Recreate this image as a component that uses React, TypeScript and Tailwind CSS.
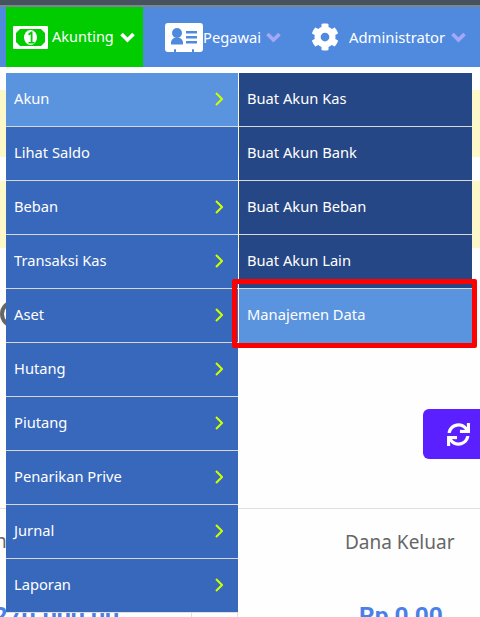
import { FaCog, FaSync } from "react-icons/fa"

const mainMenu = [
  { label: "Akun", arrow: true, active: true },
  { label: "Lihat Saldo", arrow: false },
  { label: "Beban", arrow: true },
  { label: "Transaksi Kas", arrow: true },
  { label: "Aset", arrow: true },
  { label: "Hutang", arrow: true },
  { label: "Piutang", arrow: true },
  { label: "Penarikan Prive", arrow: true },
  { label: "Jurnal", arrow: true },
  { label: "Laporan", arrow: true },
]

const subMenu = ["Buat Akun Kas", "Buat Akun Bank", "Buat Akun Beban", "Buat Akun Lain", "Manajemen Data"]

function MoneyIcon() {
  return (
    <svg viewBox="0 0 35 23" className="h-[23px] w-[35px]">
      <rect width="35" height="23" rx="1" fill="#fff" />
      <path d="M7 3h21l4 4v9l-4 4H7l-4-4V7z" fill="#00cc00" />
      <ellipse cx="17.500" cy="11.500" rx="6.500" ry="7.500" fill="#fff" />
      <path d="M15 8l3-2.500h1.500v10.500h2v1.500h-6V16h2.200V8.200l-1.700 1.200z" fill="#00cc00" />
    </svg>
  )
}

function CardIcon() {
  return (
    <svg viewBox="0 0 38 29" className="h-[29px] w-[38px]">
      <path
        fill="#fff"
        d="M3 0h32a3 3 0 0 1 3 3v23a3 3 0 0 1-3 3h-6v-2a1 1 0 0 0-2 0v2H11v-2a1 1 0 0 0-2 0v2H3a3 3 0 0 1-3-3V3a3 3 0 0 1 3-3z"
      />
      <circle cx="12" cy="10" r="5" fill="#4f8adf" />
      <path d="M6 20c0-3.500 2.500-5.500 6-5.500s6 2 6 5.500v1.500H6z" fill="#4f8adf" />
      <path d="M21 8h11v2.500H21zM21 13h11v2.500H21zM21 18h11v2.500H21z" fill="#4f8adf" />
    </svg>
  )
}

function ChevronDown({ color }: { color: string }) {
  return (
    <svg viewBox="0 0 15 11" className="h-[11px] w-[15px]" fill="none" stroke={color} strokeWidth="3.600">
      <path d="M1.500 2l6 6 6-6" />
    </svg>
  )
}

function ChevronRight() {
  return (
    <svg viewBox="0 0 8 14" className="h-[14px] w-[8px]" fill="none" stroke="#ccff00" strokeWidth="2">
      <path d="M1 1l6 6-6 6" />
    </svg>
  )
}

export default function App() {
  return (
    <div className="relative h-[617px] w-[480px] overflow-hidden bg-[#fefefe] font-['Noto_Sans','Open_Sans',sans-serif]">
      <div className="h-[5px] bg-[#46535f]" />
      <div className="h-[2px] bg-[#7d8790]" />
      <nav className="flex h-[60px] bg-[#4f8adf] pl-[6px] text-white">
        <div className="flex w-[137px] items-center bg-[#00cc00] pl-[7px]">
          <MoneyIcon />
          <span className="ml-[4px] text-[14.5px]">Akunting</span>
          <span className="ml-[6px]">
            <ChevronDown color="#fff" />
          </span>
        </div>
        <div className="ml-[22px] flex items-center">
          <CardIcon />
          <span className="text-[14.7px]">Pegawai</span>
          <span className="ml-[5px]">
            <ChevronDown color="#a5a8f5" />
          </span>
        </div>
        <div className="ml-[30px] flex items-center">
          <FaCog className="h-[28px] w-[28px]" />
          <span className="ml-[10px] text-[14.8px]">Administrator</span>
          <span className="ml-[6px]">
            <ChevronDown color="#a5a8f5" />
          </span>
        </div>
      </nav>

      {/* page content under the dropdown */}
      <div className="mt-[23px] h-[67px] bg-[#fcf8c8]" />
      <div className="mt-[24px] h-[67px] bg-[#fcf8c8]" />
      <div className="mt-[52px] h-[28px] w-[28px] rounded-full border-[4px] border-[#666]" />
      <div className="mt-[81px] flex justify-end">
        <div className="flex h-[50px] w-[57px] items-center justify-end rounded-l-[6px] bg-[#5a20ff] pr-[10px] text-white">
          <FaSync className="h-[23px] w-[23px]" />
        </div>
      </div>
      <div className="mt-[49px] border-t border-[#dedede]">
        <div className="flex h-[93px] text-[19px] text-[#666]">
          <span className="mt-[18px] w-[345px] -translate-x-[5px]">n</span>
          <span className="mt-[19px]">Dana Keluar</span>
        </div>
        <div className="flex h-[26px] font-['Roboto',sans-serif] text-[24.5px] leading-[28px] font-bold text-[#4a80e8]">
          <span className="-ml-[30px] w-[221px] shrink-0 pr-[72px] text-right whitespace-nowrap">2.270.000,00</span>
          <span className="mt-[11px] h-[15px] w-[47px] border-x border-[#dedede]" />
          <span className="ml-[121px]">Rp 0,00</span>
        </div>
      </div>

      {/* dropdown overlay */}
      <div className="absolute left-[6px] top-[73px] flex text-[14.7px] text-white">
        <ul className="w-[232px] border-b border-[#dedede]">
          {mainMenu.map((item) => (
            <li
              key={item.label}
              className={`flex h-[54px] items-center justify-between border-b border-[#d8d8d8] pr-[15px] pb-[2px] pl-[8px] last:h-[53px] last:border-b-0 ${
                item.active ? "bg-[#5b94de]" : "bg-[#3868bc]"
              }`}
            >
              <span>{item.label}</span>
              {item.arrow && <ChevronRight />}
            </li>
          ))}
        </ul>
        <ul className="ml-px w-[233px]">
          {subMenu.map((label, i) => (
            <li
              key={label}
              className={`flex h-[54px] items-center border-b border-[#d8d8d8] pl-[8px] ${
                i === 4 ? "border-b-0 bg-[#5b94de] pb-[3px]" : "bg-[#264785] pb-[2px]"
              }`}
            >
              {label}
            </li>
          ))}
        </ul>
      </div>

      {/* red highlight annotation */}
      <div className="absolute left-[232px] top-[279px] h-[69px] w-[245px] rounded-[2px] border-[5px] border-[#ff0000]" />
    </div>
  )
}
